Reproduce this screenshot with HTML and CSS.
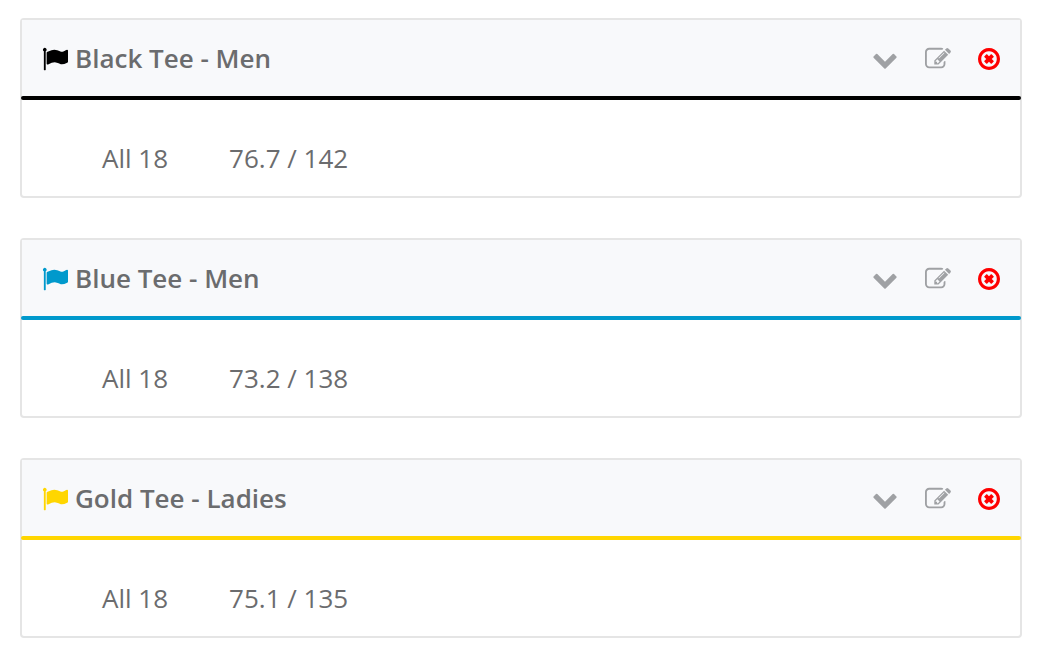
FILE: index.html
```html
<!DOCTYPE html>
<html lang="en">
	<head>
		<meta charset="UTF-8">
		<meta name="viewport" content="width=device-width, initial-scale=1">
		<title>Tees</title>
		<link rel="stylesheet" href="styles.css">
	</head>
	<body>
		<!-- icons -->
		<svg class="icon-defs" aria-hidden="true">
			<symbol id="flag" viewBox="0 0 1792 1792">
				<path d="M320 256q0 72-64 110v1266q0 13-9.5 22.5t-22.5 9.5h-64q-13 0-22.5-9.5t-9.5-22.5v-1266q-64-38-64-110 0-53 37.5-90.5t90.5-37.5 90.5 37.5 37.5 90.5zm1472 64v763q0 25-12.5 38.5t-39.5 27.5q-215 116-369 116-61 0-123.5-22t-108.5-48-115.5-48-142.5-22q-192 0-464 146-17 9-33 9-26 0-45-19t-19-45v-742q0-32 31-55 21-14 79-43 236-120 421-120 107 0 200 29t219 88q38 19 88 19 54 0 117.5-21t110-47 88-47 54.5-21q26 0 45 19t19 45z"/>
			</symbol>
			<symbol id="down" viewBox="0 0 1792 1792">
				<path d="M1683 808l-742 741q-19 19-45 19t-45-19l-742-741q-19-19-19-45.5t19-45.5l166-165q19-19 45-19t45 19l531 531 531-531q19-19 45-19t45 19l166 165q19 19 19 45.5t-19 45.5z"/>
			</symbol>
			<symbol id="edit" viewBox="0 0 1792 1792">
				<path d="M888 1184l116-116-152-152-116 116v56h96v96h56zm440-720q-16-16-33 1l-350 350q-17 17-1 33t33-1l350-350q17-17 1-33zm80 594v190q0 119-84.5 203.5t-203.5 84.5h-832q-119 0-203.5-84.5t-84.5-203.5v-832q0-119 84.5-203.5t203.5-84.5h832q63 0 117 25 15 7 18 23 3 17-9 29l-49 49q-14 14-32 8-23-6-45-6h-832q-66 0-113 47t-47 113v832q0 66 47 113t113 47h832q66 0 113-47t47-113v-126q0-13 9-22l64-64q15-15 35-7t20 29zm-96-738l288 288-672 672h-288v-288zm444 132l-92 92-288-288 92-92q28-28 68-28t68 28l152 152q28 28 28 68t-28 68z"/>
			</symbol>
			<symbol id="remove" viewBox="128 0 1536 1792">
				<path d="M1225 1079l-146 146q-10 10-23 10t-23-10l-137-137-137 137q-10 10-23 10t-23-10l-146-146q-10-10-10-23t10-23l137-137-137-137q-10-10-10-23t10-23l146-146q10-10 23-10t23 10l137 137 137-137q10-10 23-10t23 10l146 146q10 10 10 23t-10 23l-137 137 137 137q10 10 10 23t-10 23zm215-183q0-148-73-273t-198-198-273-73-273 73-198 198-73 273 73 273 198 198 273 73 273-73 198-198 73-273zm224 0q0 209-103 385.5t-279.5 279.5-385.5 103-385.5-103-279.5-279.5-103-385.5 103-385.5 279.5-279.5 385.5-103 385.5 103 279.5 279.5 103 385.5z"/>
			</symbol>
		</svg>

		<main class="tees">
			<section class="tee tee-black">
				<div class="tee-head">
					<svg class="icon flag"><use href="#flag"/></svg>
					<h2 class="tee-name">Black Tee - Men</h2>
					<div class="tools">
						<button type="button" class="tool" aria-label="Expand"><svg class="icon"><use href="#down"/></svg></button>
						<button type="button" class="tool" aria-label="Edit"><svg class="icon"><use href="#edit"/></svg></button>
						<button type="button" class="tool tool-remove" aria-label="Remove"><svg class="icon"><use href="#remove"/></svg></button>
					</div>
				</div>
				<div class="tee-line"></div>
				<div class="tee-body">
					<table class="ratings">
						<tr><th scope="row">All 18</th><td>76.7 / 142</td></tr>
					</table>
				</div>
			</section>

			<section class="tee tee-blue">
				<div class="tee-head">
					<svg class="icon flag"><use href="#flag"/></svg>
					<h2 class="tee-name">Blue Tee - Men</h2>
					<div class="tools">
						<button type="button" class="tool" aria-label="Expand"><svg class="icon"><use href="#down"/></svg></button>
						<button type="button" class="tool" aria-label="Edit"><svg class="icon"><use href="#edit"/></svg></button>
						<button type="button" class="tool tool-remove" aria-label="Remove"><svg class="icon"><use href="#remove"/></svg></button>
					</div>
				</div>
				<div class="tee-line"></div>
				<div class="tee-body">
					<table class="ratings">
						<tr><th scope="row">All 18</th><td>73.2 / 138</td></tr>
					</table>
				</div>
			</section>

			<section class="tee tee-gold">
				<div class="tee-head">
					<svg class="icon flag"><use href="#flag"/></svg>
					<h2 class="tee-name">Gold Tee - Ladies</h2>
					<div class="tools">
						<button type="button" class="tool" aria-label="Expand"><svg class="icon"><use href="#down"/></svg></button>
						<button type="button" class="tool" aria-label="Edit"><svg class="icon"><use href="#edit"/></svg></button>
						<button type="button" class="tool tool-remove" aria-label="Remove"><svg class="icon"><use href="#remove"/></svg></button>
					</div>
				</div>
				<div class="tee-line"></div>
				<div class="tee-body">
					<table class="ratings">
						<tr><th scope="row">All 18</th><td>75.1 / 135</td></tr>
					</table>
				</div>
			</section>
		</main>
	</body>
</html>
```
FILE: styles.css
```css
*{
	box-sizing: border-box;
	margin: 0;
	padding: 0;
}
body{
	background-color: #fff;
	color: #6b6c6e;
	font-family: "Open Sans", sans-serif;
	font-size: 26px;
	line-height: 36px;
}
.icon-defs{
	display: none;
}
.icon{
	display: block;
	width: 26px;
	height: 26px;
	margin-top: 2px;
	fill: currentColor;
}
.tees{
	display: flex;
	flex-direction: column;
	gap: 40px;
	padding: 18px 22px 20px 20px;
}

/* one panel for each tee */
.tee{
	border: 2px solid #e5e5e5;
	border-radius: 4px;
}
.tee-head{
	display: flex;
	align-items: center;
	padding: 20px;
	background-color: #f8f9fb;
}
.tee-name{
	margin-left: 7px;
	font-size: 26px;
	font-weight: 600;
}
.tools{
	display: flex;
	gap: 27px;
	margin-left: auto;
}
.tool{
	border: 0;
	background: none;
	color: #9fa1a4;
	cursor: pointer;
}
.tool-remove{
	color: #f00;
}
.tool-remove .icon{
	width: 22px;
}

/* the line overlaps half of the border on both sides */
.tee-line{
	height: 4px;
	margin: 0 -1px;
	border-radius: 2px;
	background-color: currentColor;
}
.tee-black .flag,
.tee-black .tee-line{
	color: #000;
}
.tee-blue .flag,
.tee-blue .tee-line{
	color: #0099cc;
}
.tee-gold .flag,
.tee-gold .tee-line{
	color: #ffd600;
}

.tee-body{
	padding: 40px 20px 20px 80px;
}
.ratings{
	border-collapse: collapse;
}
.ratings th{
	padding-right: 61px;
	font-weight: 400;
	text-align: left;
}
```
